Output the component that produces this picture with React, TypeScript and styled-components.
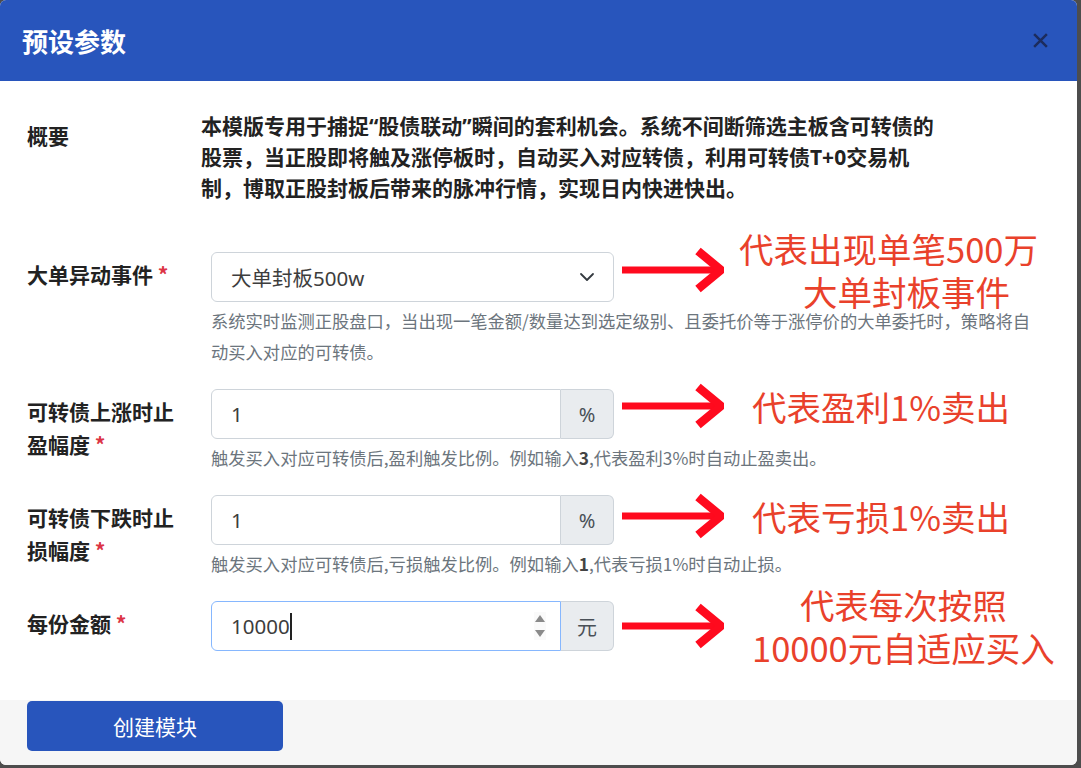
import React from "react";
import styled, { createGlobalStyle } from "styled-components";

const blue = "#2855bc";
const red = "#e9412b";
const arrowRed = "#ff0a1e";

const GlobalStyle = createGlobalStyle`
  html, body {
    margin: 0;
    padding: 0;
    background: #4d4d4d;
  }
  body {
    font-family: "Noto Sans", "Noto Sans CJK SC", sans-serif;
  }
`;

interface NoteProps {
  lines: string[];
  offset: number;
  secondIndent?: number;
  lift?: number;
}

const Arrow = () => (
  <svg width="102" height="46" viewBox="0 0 102 46">
    <line x1="0" y1="23" x2="96" y2="23" stroke={arrowRed} strokeWidth="7" />
    <polyline
      points="76,4 99,23 76,42"
      fill="none"
      stroke={arrowRed}
      strokeWidth="8.5"
      strokeLinejoin="miter"
    />
  </svg>
);

const Note = ({ lines, offset, secondIndent = 0, lift = 6 }: NoteProps) => (
  <NoteWrap $lift={lift}>
    <Arrow />
    <NoteText $offset={offset}>
      {lines.map((l, i) => (
        <NoteLine key={l} $indent={i === 1 ? secondIndent : 0}>
          {l}
        </NoteLine>
      ))}
    </NoteText>
  </NoteWrap>
);

const Chevron = () => (
  <svg width="16" height="16" viewBox="0 0 16 16">
    <path d="M2 5l6 6 6-6" fill="none" stroke="#343a40" strokeWidth="1.8" strokeLinecap="round" strokeLinejoin="round" />
  </svg>
);

const Spinner = () => (
  <SpinBox>
    <svg width="12" height="28" viewBox="0 0 12 28">
      <path d="M6 3l5 7H1z" fill="#8a8a8a" />
      <path d="M6 25l5-7H1z" fill="#8a8a8a" />
    </svg>
  </SpinBox>
);

const App = () => {
  return (
    <>
      <GlobalStyle />
      <Modal>
        <Header>
          <Title>预设参数</Title>
          <Close aria-label="close">
            <svg width="17" height="17" viewBox="0 0 16 16">
              <path d="M2 2l12 12M14 2L2 14" stroke="#1c2c5e" strokeWidth="2.4" />
            </svg>
          </Close>
        </Header>
        <Body>
          <Row $gap={46}>
            <Label $width={174}>概要</Label>
            <Summary>
              本模版专用于捕捉“股债联动”瞬间的套利机会。系统不间断筛选主板含可转债的股票，当正股即将触及涨停板时，自动买入对应转债，利用可转债T+0交易机制，博取正股封板后带来的脉冲行情，实现日内快进快出。
            </Summary>
          </Row>

          <Row>
            <Label>
              大单异动事件 <Star>*</Star>
            </Label>
            <Field>
              <Control>
                <Box>
                  <Value>大单封板500w</Value>
                  <Chevron />
                </Box>
                <Note lines={["代表出现单笔500万", "大单封板事件"]} offset={17} secondIndent={36} lift={7} />
              </Control>
              <Help>
                系统实时监测正股盘口，当出现一笔金额/数量达到选定级别、且委托价等于涨停价的大单委托时，策略将自动买入对应的可转债。
              </Help>
            </Field>
          </Row>

          <Row>
            <Label>
              可转债上涨时止盈幅度 <Star>*</Star>
            </Label>
            <Field>
              <Control>
                <Box $grouped>
                  <Value>1</Value>
                </Box>
                <Addon>%</Addon>
                <Note lines={["代表盈利1%卖出"]} offset={30} lift={8} />
              </Control>
              <Help>
                触发买入对应可转债后,盈利触发比例。例如输入<b>3</b>,代表盈利3%时自动止盈卖出。
              </Help>
            </Field>
          </Row>

          <Row>
            <Label>
              可转债下跌时止损幅度 <Star>*</Star>
            </Label>
            <Field>
              <Control>
                <Box $grouped>
                  <Value>1</Value>
                </Box>
                <Addon>%</Addon>
                <Note lines={["代表亏损1%卖出"]} offset={30} lift={4} />
              </Control>
              <Help>
                触发买入对应可转债后,亏损触发比例。例如输入<b>1</b>,代表亏损1%时自动止损。
              </Help>
            </Field>
          </Row>

          <Row>
            <Label>
              每份金额 <Star>*</Star>
            </Label>
            <Field>
              <Control>
                <Box $grouped $focused>
                  <Value>
                    10000<Caret />
                  </Value>
                  <Spinner />
                </Box>
                <Addon>元</Addon>
                <Note lines={["代表每次按照", "10000元自适应买入"]} offset={30} lift={0} />
              </Control>
            </Field>
          </Row>
        </Body>
        <Footer>
          <CreateBtn>创建模块</CreateBtn>
        </Footer>
      </Modal>
    </>
  );
};

const Modal = styled.div`
  width: 1077px;
  height: 765px;
  background: #fff;
  border-radius: 6px;
  overflow: hidden;
  display: flex;
  flex-direction: column;
`;
const Header = styled.div`
  height: 83px;
  background: ${blue};
  display: flex;
  align-items: center;
  justify-content: space-between;
  padding: 0 28px 0 22px;
  box-sizing: border-box;
`;
const Title = styled.h1`
  margin: 0;
  font-family: "Noto Sans CJK SC", sans-serif;
  font-size: 26px;
  font-weight: 700;
  color: #fff;
`;
const Close = styled.button`
  border: 0;
  background: none;
  padding: 0;
  display: flex;
  cursor: pointer;
`;
const Body = styled.div`
  flex: 1;
  padding: 30px 37px 29px 27px;
  box-sizing: border-box;
`;
const Row = styled.div<{ $gap?: number }>`
  display: flex;
  margin-bottom: ${({ $gap }) => $gap ?? 20}px;
`;
const Label = styled.div<{ $width?: number }>`
  flex: 0 0 ${({ $width }) => $width ?? 184}px;
  box-sizing: border-box;
  padding: 8px 30px 0 0;
  font-family: "Noto Sans CJK SC", sans-serif;
  font-size: 21px;
  font-weight: 700;
  line-height: 33px;
  color: #222;
`;
const Star = styled.span`
  color: #dc3545;
`;
const Summary = styled.div`
  max-width: 736px;
  font-family: "Noto Sans", "Noto Sans CJK SC", sans-serif;
  font-size: 21px;
  font-weight: 700;
  line-height: 31px;
  color: #222;
`;
const Field = styled.div`
  flex: 1;
`;
const Control = styled.div`
  position: relative;
  width: 403px;
  height: 50px;
  margin-top: 2px;
  display: flex;
`;
const Box = styled.div<{ $grouped?: boolean; $focused?: boolean }>`
  flex: 1;
  display: flex;
  align-items: center;
  justify-content: space-between;
  padding: 0 18px 0 19px;
  border: 1px solid ${({ $focused }) => ($focused ? "#86b7fe" : "#ced4da")};
  border-radius: ${({ $grouped }) => ($grouped ? "6px 0 0 6px" : "6px")};
  background: #fff;
`;
const Value = styled.span`
  font-family: "Noto Sans", "Noto Sans CJK SC", sans-serif;
  font-size: 20.5px;
  color: #3d3d3d;
  display: flex;
  align-items: center;
`;
const Caret = styled.span`
  display: inline-block;
  width: 2px;
  height: 27px;
  background: #222;
`;
const SpinBox = styled.span`
  display: flex;
  background: #fafafa;
  margin-right: -4px;
`;
const Addon = styled.div`
  flex: 0 0 53px;
  box-sizing: border-box;
  display: flex;
  align-items: center;
  justify-content: center;
  background: #e9ecef;
  border: 1px solid #ced4da;
  border-left: 0;
  border-radius: 0 6px 6px 0;
  font-family: "Noto Sans", "Noto Sans CJK SC", sans-serif;
  font-size: 20px;
  color: #495057;
`;
const Help = styled.div`
  margin-top: 3px;
  font-family: "Noto Sans CJK SC", sans-serif;
  font-size: 17.3px;
  line-height: 31px;
  color: #6c757d;
  b {
    color: #444;
  }
`;
const NoteWrap = styled.div<{ $lift: number }>`
  position: absolute;
  left: calc(100% + 8px);
  top: 50%;
  transform: translateY(calc(-50% - ${({ $lift }) => $lift}px));
  display: flex;
  align-items: center;
  pointer-events: none;
`;
const NoteText = styled.div<{ $offset: number }>`
  margin-left: ${({ $offset }) => $offset - 2}px;
  font-family: "Noto Sans CJK SC", sans-serif;
  font-size: 34.5px;
  line-height: 43px;
  color: ${red};
  text-align: center;
  white-space: nowrap;
`;
const NoteLine = styled.div<{ $indent: number }>`
  padding-left: ${({ $indent }) => $indent}px;
`;
const Footer = styled.div`
  height: 66px;
  background: #f6f6f6;
  padding: 1px 27px 0;
  box-sizing: border-box;
`;
const CreateBtn = styled.button`
  width: 256px;
  height: 50px;
  border: 0;
  border-radius: 5px;
  background: ${blue};
  color: #fff;
  font-family: "Noto Sans CJK SC", sans-serif;
  font-size: 21px;
  cursor: pointer;
`;

export default App;
